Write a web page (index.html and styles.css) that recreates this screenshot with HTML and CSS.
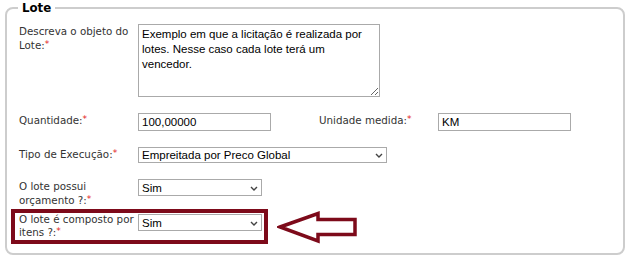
FILE: index.html
```html
<!DOCTYPE html>
<html lang="pt-BR">

<head>
    <meta charset="UTF-8">
    <meta name="viewport" content="width=device-width, initial-scale=1.0">
    <title>Lote</title>
    <link rel="stylesheet" href="styles.css">
</head>

<body>
    <form class="lote-form">
        <fieldset>
            <legend>Lote</legend>

            <div class="row first">
                <label class="label" for="descricao">Descreva o objeto do <span class="line">Lote:<span class="req">*</span></span></label>
                <textarea id="descricao" name="descricao">Exemplo em que a licitação é realizada por lotes. Nesse caso cada lote terá um vencedor.</textarea>
            </div>

            <div class="row">
                <label class="label" for="quantidade">Quantidade:<span class="req">*</span></label>
                <input type="text" id="quantidade" name="quantidade" value="100,00000">
                <label class="label label-inline" for="unidade">Unidade medida:<span class="req">*</span></label>
                <input type="text" id="unidade" name="unidade" value="KM">
            </div>

            <div class="row">
                <label class="label" for="tipo">Tipo de Execução:<span class="req">*</span></label>
                <span class="select wide">
                    <select id="tipo" name="tipo">
                        <option>Empreitada por Preco Global</option>
                        <option>Empreitada por Preco Unitario</option>
                    </select>
                    <svg class="chevron" width="8" height="5" viewBox="0 0 8 5"><path d="M1 1l3 3 3-3" fill="none" stroke="#444" stroke-width="1.4"/></svg>
                </span>
            </div>

            <div class="row">
                <label class="label" for="orcamento">O lote possui <span class="line">orçamento ?:<span class="req">*</span></span></label>
                <span class="select">
                    <select id="orcamento" name="orcamento">
                        <option>Sim</option>
                        <option>Não</option>
                    </select>
                    <svg class="chevron" width="8" height="5" viewBox="0 0 8 5"><path d="M1 1l3 3 3-3" fill="none" stroke="#444" stroke-width="1.4"/></svg>
                </span>
            </div>

            <div class="highlight-row">
                <div class="row boxed">
                    <label class="label" for="itens">O lote é composto por <span class="line">itens ?:<span class="req">*</span></span></label>
                    <span class="select">
                        <select id="itens" name="itens">
                            <option>Sim</option>
                            <option>Não</option>
                        </select>
                        <svg class="chevron" width="8" height="5" viewBox="0 0 8 5"><path d="M1 1l3 3 3-3" fill="none" stroke="#444" stroke-width="1.4"/></svg>
                    </span>
                </div>
                <svg class="arrow" width="80" height="34" viewBox="0 0 80 34">
                    <polygon points="3,17 41,3.5 41,9.5 78,9.5 78,24.5 41,24.5 41,31" fill="#fff" stroke="#7d0a1a" stroke-width="3.5" stroke-linejoin="miter"/>
                </svg>
            </div>
        </fieldset>
    </form>
</body>

</html>
```

FILE: styles.css
```css
body {
    margin: 0;
    padding: 0;
    background-color: #fff;
    font-family: "DejaVu Sans", Verdana, sans-serif;
    color: #333;
}

fieldset {
    margin: 0 8px 0 5px;
    padding: 0 10px 9px 11px;
    border: 2px solid #cdcdcd;
    border-radius: 8px;
}

legend {
    padding: 1px 4px 0;
    font-size: 11.8px;
    line-height: 15px;
    font-weight: bold;
    color: #000;
}

.row {
    display: flex;
    align-items: flex-start;
    margin-top: 16px;
}

.row.first {
    margin-top: 8px;
}

.label {
    flex: none;
    width: 119px;
    padding-left: 1px;
    font-size: 10.3px;
    line-height: 13.5px;
    padding-top: 1px;
}

.label .line {
    display: block;
}

.label-inline {
    margin-left: 47px;
}

.req {
    position: relative;
    top: -2px;
    color: #e31b1b;
    font-size: 9px;
}

textarea,
input,
select {
    font-family: "Liberation Sans", Arial, sans-serif;
    font-size: 11.5px;
    color: #000;
    border: 1px solid #aaa;
    border-radius: 0;
    background-color: #fff;
    box-sizing: border-box;
    margin: 0;
    outline: none;
}

textarea {
    width: 242px;
    height: 73px;
    padding: 2px 3px;
    line-height: 15px;
}

input {
    width: 133px;
    height: 18px;
    padding: 0 3px;
}

.select {
    position: relative;
    display: inline-flex;
}

select {
    appearance: none;
    width: 124px;
    height: 17px;
    padding: 0 3px;
}

.select.wide select {
    width: 249px;
    height: 16px;
}

.chevron {
    position: absolute;
    right: 4px;
    top: 50%;
    margin-top: -2px;
    pointer-events: none;
}

.highlight-row {
    display: flex;
    align-items: center;
    margin-top: 1px;
}

.row.boxed {
    margin: 0 0 0 -7px;
    padding: 0 2px 0 3px;
    border: 4px solid #7d0a1a;
}

.row.boxed .label {
    padding-top: 0;
    line-height: 13px;
}

.row.boxed .select {
    margin-top: 1px;
}

.arrow {
    margin-left: 9px;
}
```
